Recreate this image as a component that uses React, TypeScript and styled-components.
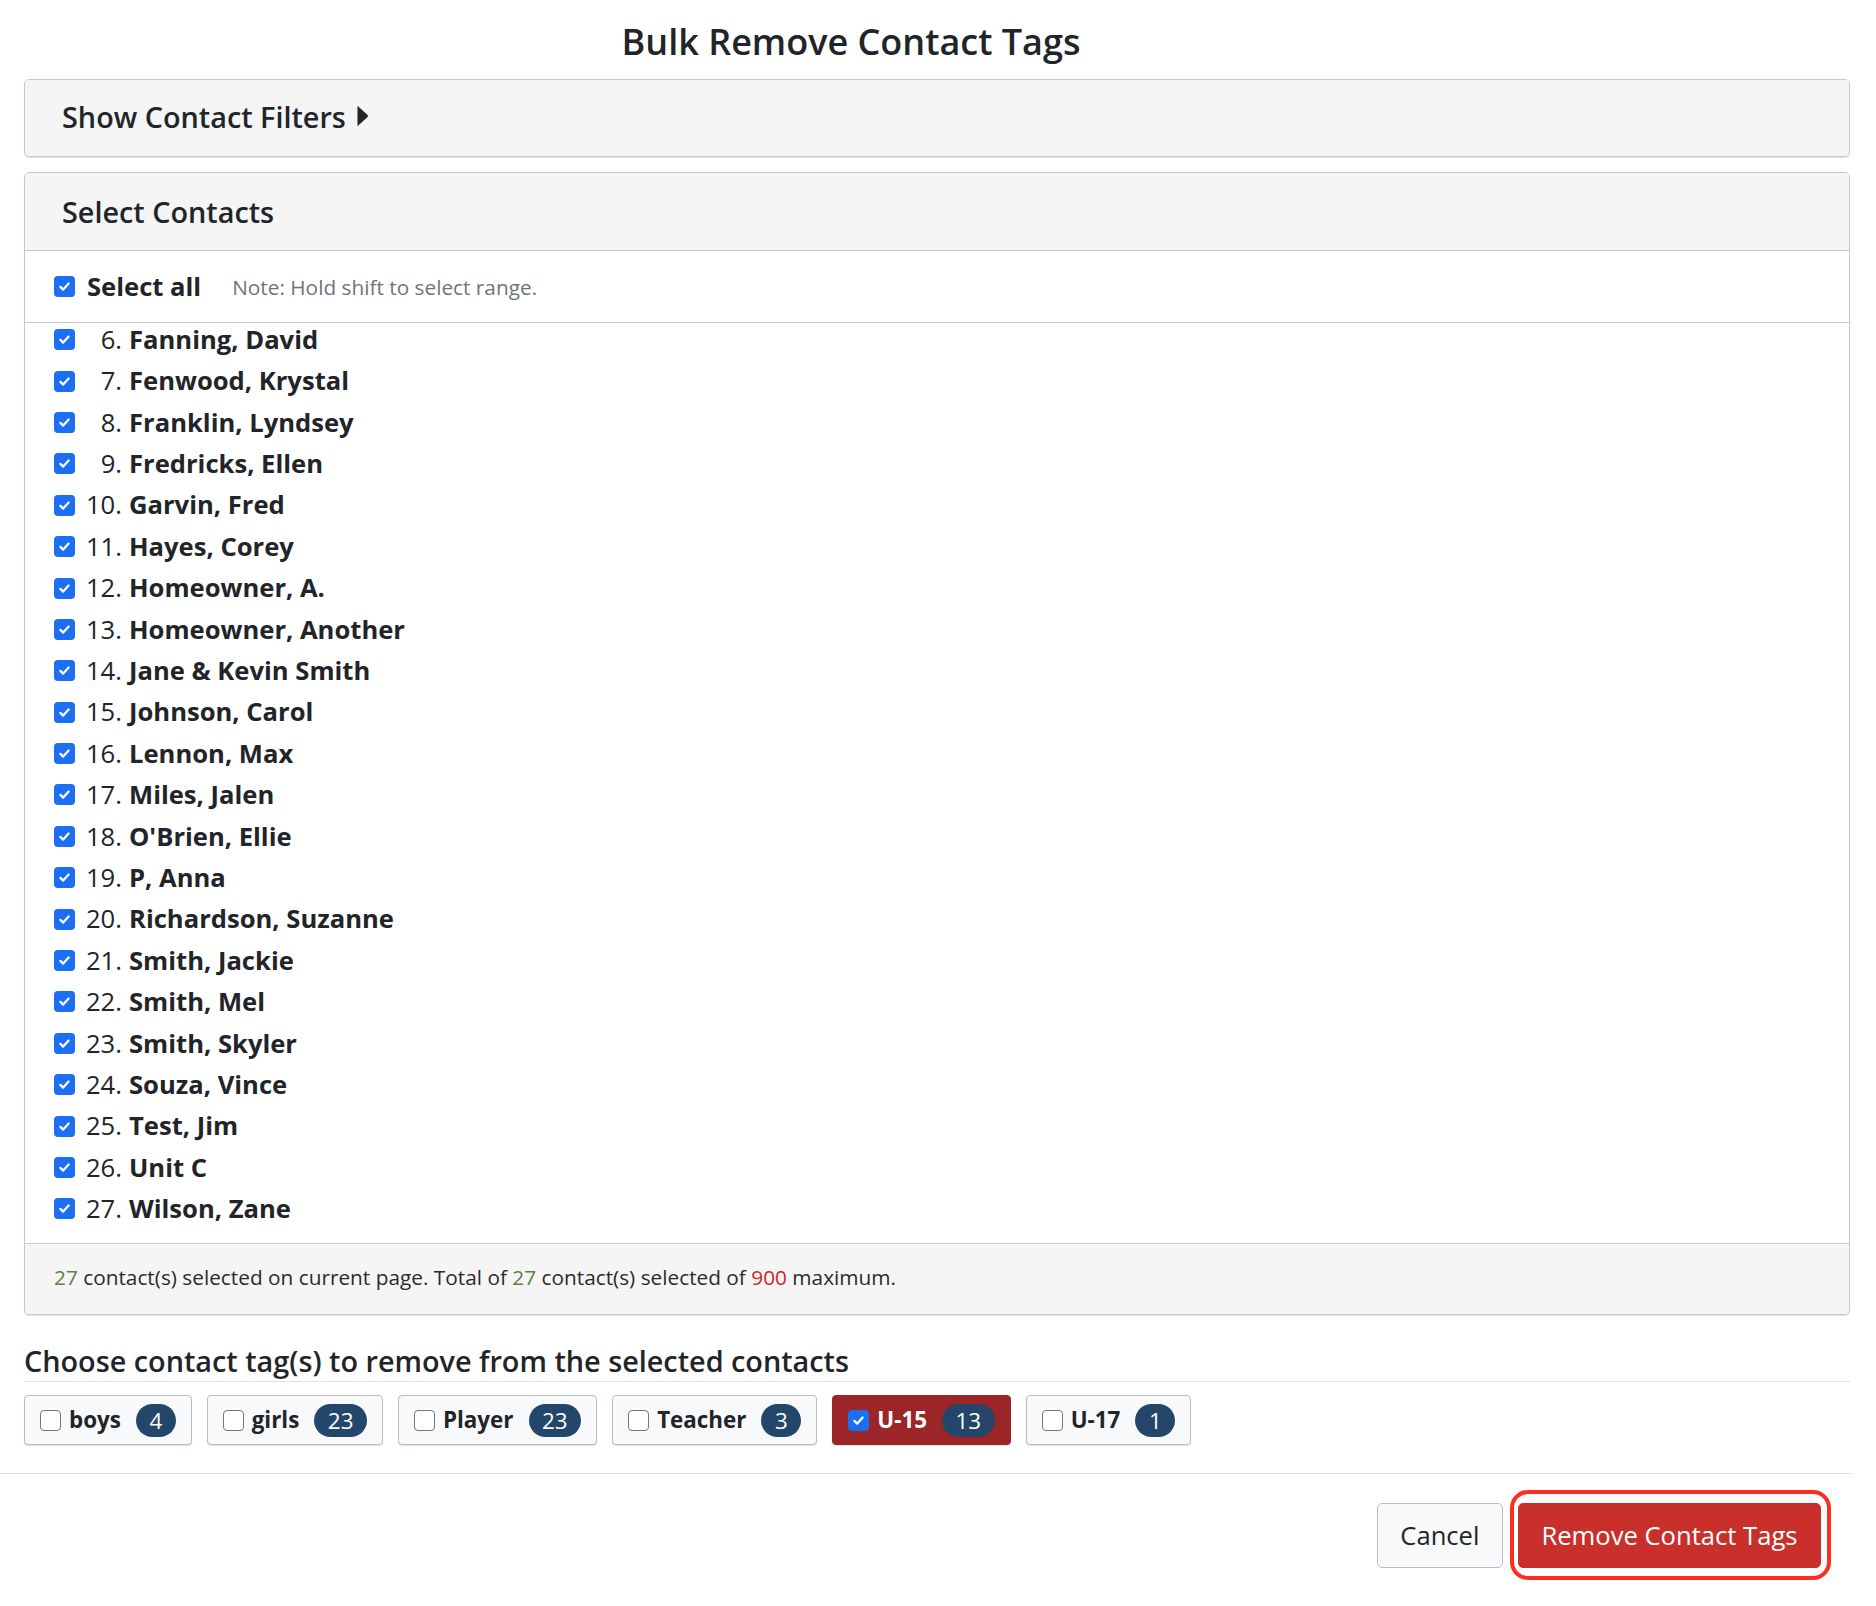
import React from 'react';
import styled, { createGlobalStyle } from 'styled-components';

const GlobalStyle = createGlobalStyle`
  html, body { margin: 0; padding: 0; background: #ffffff; }
  body {
    font-family: "Open Sans", "Noto Sans", "Liberation Sans", sans-serif;
    color: #212529;
  }
  * { box-sizing: border-box; }
`;

const Page = styled.div`
  width: 1876px;
  height: 1606px;
  overflow: hidden;
  padding: 0 26px 0 24px;
  display: flex;
  flex-direction: column;
`;

const Title = styled.h1`
  margin: 20px 0 16px;
  padding-right: 172px;
  font-size: 36px;
  line-height: 43px;
  font-weight: 600;
  text-align: center;
  color: #212529;
`;

const Panel = styled.section<{ $gap?: number }>`
  border: 1px solid #c8c8c8;
  border-radius: 5px;
  background: #ffffff;
  box-shadow: 0 1px 1px rgba(0, 0, 0, 0.12);
  margin-bottom: ${(p) => p.$gap ?? 0}px;
`;

const PanelHeading = styled.div<{ $height: number; $divider?: boolean; $lift?: number }>`
  height: ${(p) => p.$height}px;
  background: #f5f5f5;
  display: flex;
  align-items: center;
  gap: 10px;
  padding: 0 37px ${(p) => p.$lift ?? 0}px;
  font-size: 28.8px;
  font-weight: 600;
  color: #212529;
  border-radius: 4px 4px ${(p) => (p.$divider ? '0 0' : '4px 4px')};
  border-bottom: ${(p) => (p.$divider ? '1px solid #c8c8c8' : 'none')};
`;

const SelectAllRow = styled.div`
  height: 72px;
  display: flex;
  align-items: center;
  padding-left: 29px;
  border-bottom: 1px solid #c8c8c8;
`;

const SelectAllLabel = styled.span`
  margin-left: 12px;
  font-size: 25.6px;
  font-weight: 700;
`;

const Note = styled.span`
  margin-left: 31px;
  font-size: 20.8px;
  color: #6c757d;
`;

const ListViewport = styled.div`
  display: flow-root;
  height: 920px;
  padding-left: 29px;
`;

const ListInner = styled.ol`
  list-style: none;
  margin: -4px 0 0;
  padding: 0;
`;

const ContactRow = styled.li`
  height: 41.4px;
  display: grid;
  grid-template-columns: 21px 47px auto;
  align-items: center;
  font-size: 25.6px;
  line-height: 1;
`;

const RowNumber = styled.span`
  text-align: right;
  font-weight: 400;
`;

const RowName = styled.span`
  margin-left: 7px;
  font-weight: 700;
`;

const PanelFooter = styled.div`
  height: 71px;
  background: #f5f5f5;
  border-top: 1px solid #c8c8c8;
  border-radius: 0 0 4px 4px;
  display: flex;
  align-items: center;
  padding: 0 0 4px 29px;
  font-size: 20.8px;
  color: #2b2b2b;
`;

const Count = styled.span<{ $tone: 'green' | 'red' }>`
  color: ${(p) => (p.$tone === 'green' ? '#5b7f45' : '#d7261f')};
`;

const SectionHeading = styled.h2`
  margin: 29px 0 0;
  padding-bottom: 3px;
  font-size: 28.8px;
  line-height: 34px;
  font-weight: 600;
  color: #212529;
  border-bottom: 1px solid #dde3e3;
`;

const ChipRow = styled.div`
  display: flex;
  gap: 15px;
  margin-top: 13px;
`;

const Chip = styled.label<{ $active?: boolean }>`
  height: 50px;
  display: flex;
  align-items: center;
  padding: 0 15px 0 15px;
  border-radius: 4px;
  border: 1px solid ${(p) => (p.$active ? '#9b2527' : '#b9bec3')};
  background: ${(p) => (p.$active ? '#9b2527' : '#f8f9fa')};
  box-shadow: 0 1px 1px rgba(0, 0, 0, 0.12);
  color: ${(p) => (p.$active ? '#ffffff' : '#212529')};
`;

const ChipLabel = styled.span`
  margin: 0 15px 0 8px;
  font-size: 22.4px;
  font-weight: 700;
  line-height: 1;
`;

const Badge = styled.span`
  height: 33px;
  padding: 0 13.5px;
  border-radius: 17px;
  background: #25466b;
  color: #ffffff;
  font-size: 22.4px;
  display: flex;
  align-items: center;
  justify-content: center;
`;

const Box = styled.span<{ $checked: boolean }>`
  width: 21px;
  height: 21px;
  flex: none;
  border-radius: 4px;
  display: flex;
  align-items: center;
  justify-content: center;
  background: ${(p) => (p.$checked ? '#1c6ef2' : '#ffffff')};
  border: ${(p) => (p.$checked ? 'none' : '1.5px solid #767676')};
`;

const Footer = styled.div`
  margin: 28px -1px 0 -24px;
  border-top: 1px solid #d9e1e1;
  padding: 29px 30px 0 0;
  display: flex;
  justify-content: flex-end;
  gap: 15px;
`;

const Button = styled.button<{ $variant: 'light' | 'danger' }>`
  position: relative;
  height: 65px;
  padding: 0 22.5px;
  border-radius: 5px;
  font-family: inherit;
  font-size: 25.6px;
  line-height: 1;
  cursor: pointer;
  border: 1px solid ${(p) => (p.$variant === 'danger' ? '#c9302c' : '#b8bfc6')};
  background: ${(p) => (p.$variant === 'danger' ? '#c9302c' : '#f8f9fa')};
  color: ${(p) => (p.$variant === 'danger' ? '#ffffff' : '#212529')};
`;

const Highlight = styled.span`
  position: absolute;
  top: -14px;
  right: -11px;
  bottom: -13px;
  left: -9px;
  border: 4px solid #ff2d1f;
  border-radius: 18px;
  pointer-events: none;
`;

function CheckBox({ checked }: { checked: boolean }) {
  return (
    <Box $checked={checked}>
      {checked && (
        <svg width="15" height="15" viewBox="0 0 16 16" aria-hidden="true">
          <path
            d="M3.6 8.4 L6.6 11.3 L12.4 4.8"
            fill="none"
            stroke="#ffffff"
            strokeWidth="2.4"
            strokeLinecap="round"
            strokeLinejoin="round"
          />
        </svg>
      )}
    </Box>
  );
}

function Caret() {
  return (
    <svg width="13" height="22" viewBox="0 0 13 22" aria-hidden="true">
      <path d="M1.5 1.5 Q1 0.5 2 1.2 L11.6 10 Q12.4 11 11.6 12 L2 20.8 Q1 21.5 1.5 20.5 Z" fill="#212529" />
    </svg>
  );
}

const contacts: [number, string][] = [
  [6, 'Fanning, David'],
  [7, 'Fenwood, Krystal'],
  [8, 'Franklin, Lyndsey'],
  [9, 'Fredricks, Ellen'],
  [10, 'Garvin, Fred'],
  [11, 'Hayes, Corey'],
  [12, 'Homeowner, A.'],
  [13, 'Homeowner, Another'],
  [14, 'Jane & Kevin Smith'],
  [15, 'Johnson, Carol'],
  [16, 'Lennon, Max'],
  [17, 'Miles, Jalen'],
  [18, "O'Brien, Ellie"],
  [19, 'P, Anna'],
  [20, 'Richardson, Suzanne'],
  [21, 'Smith, Jackie'],
  [22, 'Smith, Mel'],
  [23, 'Smith, Skyler'],
  [24, 'Souza, Vince'],
  [25, 'Test, Jim'],
  [26, 'Unit C'],
  [27, 'Wilson, Zane'],
];

const tags: { name: string; count: number; checked: boolean }[] = [
  { name: 'boys', count: 4, checked: false },
  { name: 'girls', count: 23, checked: false },
  { name: 'Player', count: 23, checked: false },
  { name: 'Teacher', count: 3, checked: false },
  { name: 'U-15', count: 13, checked: true },
  { name: 'U-17', count: 1, checked: false },
];

export default function App() {
  return (
    <>
      <GlobalStyle />
      <Page>
        <Title>Bulk Remove Contact Tags</Title>

        <Panel $gap={15}>
          <PanelHeading $height={76} $lift={4}>
            Show Contact Filters <Caret />
          </PanelHeading>
        </Panel>

        <Panel>
          <PanelHeading $height={78} $divider>
            Select Contacts
          </PanelHeading>
          <SelectAllRow>
            <CheckBox checked />
            <SelectAllLabel>Select all</SelectAllLabel>
            <Note>Note: Hold shift to select range.</Note>
          </SelectAllRow>
          <ListViewport>
            <ListInner>
              {contacts.map(([n, name]) => (
                <ContactRow key={n}>
                  <CheckBox checked />
                  <RowNumber>{n}.</RowNumber>
                  <RowName>{name}</RowName>
                </ContactRow>
              ))}
            </ListInner>
          </ListViewport>
          <PanelFooter>
            <span>
              <Count $tone="green">27</Count> contact(s) selected on current page. Total of{' '}
              <Count $tone="green">27</Count> contact(s) selected of <Count $tone="red">900</Count>{' '}
              maximum.
            </span>
          </PanelFooter>
        </Panel>

        <SectionHeading>Choose contact tag(s) to remove from the selected contacts</SectionHeading>

        <ChipRow>
          {tags.map((t) => (
            <Chip key={t.name} $active={t.checked}>
              <CheckBox checked={t.checked} />
              <ChipLabel>{t.name}</ChipLabel>
              <Badge>{t.count}</Badge>
            </Chip>
          ))}
        </ChipRow>

        <Footer>
          <Button $variant="light">Cancel</Button>
          <Button $variant="danger">
            Remove Contact Tags
            <Highlight />
          </Button>
        </Footer>
      </Page>
    </>
  );
}
